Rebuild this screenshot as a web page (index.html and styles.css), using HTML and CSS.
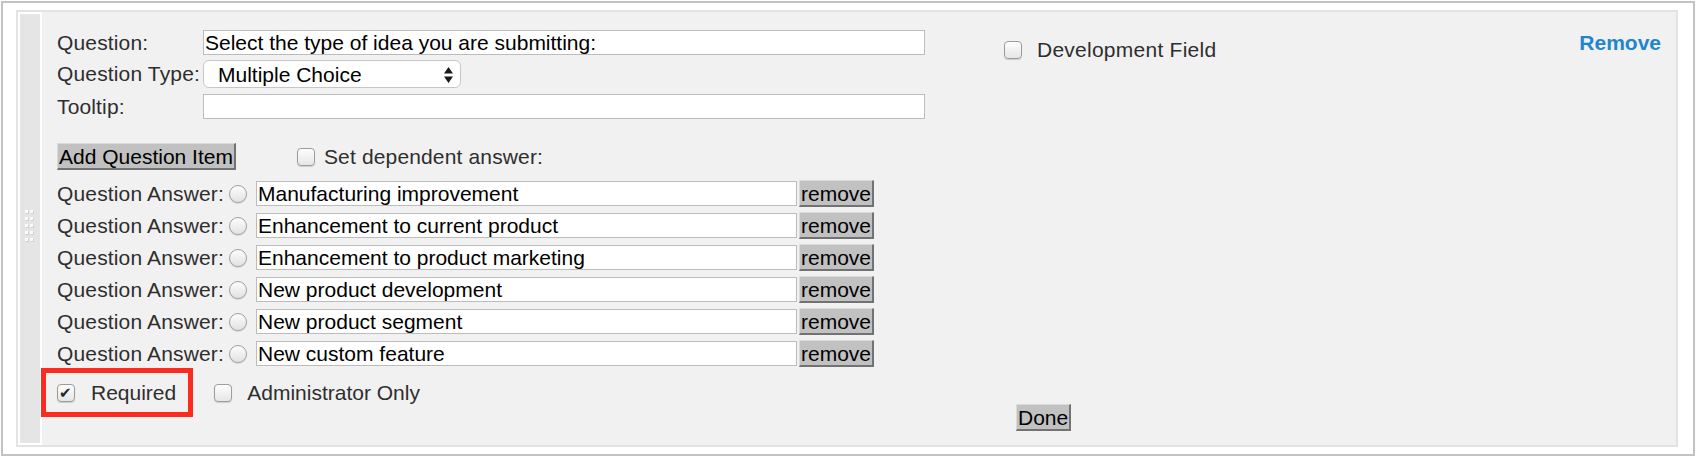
FILE: index.html
```html
<!DOCTYPE html>
<html lang="en">
<head>
    <meta charset="UTF-8">
    <title>Question Editor</title>
    <link rel="stylesheet" href="styles.css">
</head>
<body>
    <div class="frame">
        <div class="panel">
            <div class="handle">
                <svg width="10" height="34" viewBox="0 0 10 34">
                    <g fill="#d0d0d0">
                        <rect x="1" y="1" width="3" height="3"/><rect x="6" y="1" width="3" height="3"/>
                        <rect x="1" y="8" width="3" height="3"/><rect x="6" y="8" width="3" height="3"/>
                        <rect x="1" y="15" width="3" height="3"/><rect x="6" y="15" width="3" height="3"/>
                        <rect x="1" y="22" width="3" height="3"/><rect x="6" y="22" width="3" height="3"/>
                        <rect x="1" y="29" width="3" height="3"/><rect x="6" y="29" width="3" height="3"/>
                    </g>
                    <g fill="#fafafa">
                        <rect x="0" y="0" width="3" height="3"/><rect x="5" y="0" width="3" height="3"/>
                        <rect x="0" y="7" width="3" height="3"/><rect x="5" y="7" width="3" height="3"/>
                        <rect x="0" y="14" width="3" height="3"/><rect x="5" y="14" width="3" height="3"/>
                        <rect x="0" y="21" width="3" height="3"/><rect x="5" y="21" width="3" height="3"/>
                        <rect x="0" y="28" width="3" height="3"/><rect x="5" y="28" width="3" height="3"/>
                    </g>
                </svg>
            </div>

            <div class="content">
                <div class="top">
                    <div class="fields">
                        <div class="field">
                            <label class="field-label">Question:</label>
                            <input class="text wide" type="text" value="Select the type of idea you are submitting:">
                        </div>
                        <div class="field field-type">
                            <label class="field-label">Question Type:</label>
                            <span class="select-wrap">
                                <select class="select">
                                    <option>Multiple Choice</option>
                                    <option>Single Line Text</option>
                                    <option>Checkbox</option>
                                </select>
                                <svg class="arrows" width="9" height="16" viewBox="0 0 9 16">
                                    <path d="M4.5 0 L9 6.5 H0 Z M0 9.5 H9 L4.5 16 Z" fill="#1a1a1a"/>
                                </svg>
                            </span>
                        </div>
                        <div class="field field-tooltip">
                            <label class="field-label">Tooltip:</label>
                            <input class="text wide" type="text" value="">
                        </div>
                    </div>
                    <label class="check dev"><input type="checkbox">Development Field</label>
                    <a class="remove-link" href="#">Remove</a>
                </div>

                <div class="add-row">
                    <button class="btn" type="button">Add Question Item</button>
                    <label class="check dependent"><input type="checkbox">Set dependent answer:</label>
                </div>

                <div class="answers">
                    <div class="answer">
                        <span class="answer-label">Question Answer:</span>
                        <input class="radio" type="radio" name="default">
                        <input class="text answer-text" type="text" value="Manufacturing improvement">
                        <button class="btn" type="button">remove</button>
                    </div>
                    <div class="answer">
                        <span class="answer-label">Question Answer:</span>
                        <input class="radio" type="radio" name="default">
                        <input class="text answer-text" type="text" value="Enhancement to current product">
                        <button class="btn" type="button">remove</button>
                    </div>
                    <div class="answer">
                        <span class="answer-label">Question Answer:</span>
                        <input class="radio" type="radio" name="default">
                        <input class="text answer-text" type="text" value="Enhancement to product marketing">
                        <button class="btn" type="button">remove</button>
                    </div>
                    <div class="answer">
                        <span class="answer-label">Question Answer:</span>
                        <input class="radio" type="radio" name="default">
                        <input class="text answer-text" type="text" value="New product development">
                        <button class="btn" type="button">remove</button>
                    </div>
                    <div class="answer">
                        <span class="answer-label">Question Answer:</span>
                        <input class="radio" type="radio" name="default">
                        <input class="text answer-text" type="text" value="New product segment">
                        <button class="btn" type="button">remove</button>
                    </div>
                    <div class="answer">
                        <span class="answer-label">Question Answer:</span>
                        <input class="radio" type="radio" name="default">
                        <input class="text answer-text" type="text" value="New custom feature">
                        <button class="btn" type="button">remove</button>
                    </div>
                </div>

                <div class="flags">
                    <label class="check highlight"><input type="checkbox" checked>Required</label>
                    <label class="check"><input type="checkbox">Administrator Only</label>
                </div>

                <div class="actions">
                    <button class="btn done" type="button">Done</button>
                </div>
            </div>
        </div>
    </div>
</body>
</html>
```

FILE: styles.css
```css
/* Base */
* {
    box-sizing: border-box;
}

body {
    margin: 0;
    font-family: 'Liberation Sans', Arial, sans-serif;
    font-size: 21px;
    color: #2e2e2e;
    background: #fff;
}

/* Outer frame */
.frame {
    margin: 1px;
    border: 2px solid #c3c3c3;
    padding: 7px 15px 7px 13px;
    background: #fff;
}

/* Question panel */
.panel {
    display: flex;
    border: 2px solid #e3e3e3;
    background: #f1f1f1;
}

.handle {
    width: 24px;
    border: 2px solid #fff;
    background: #e5e5e5;
    display: flex;
    align-items: center;
    justify-content: center;
}

.handle svg {
    display: block;
    margin-top: -3px;
}

.content {
    flex: 1;
    padding: 18px 15px 14px 15px;
}

/* Top block */
.top {
    display: flex;
    align-items: flex-start;
}

.fields {
    width: 868px;
}

.field {
    display: flex;
    align-items: center;
    height: 25px;
}

.field-type {
    height: 28px;
    margin-top: 5px;
}

.field-tooltip {
    margin-top: 6px;
}

.field-label {
    width: 146px;
    white-space: nowrap;
    letter-spacing: 0.15px;
}

/* Text inputs */
.text {
    height: 25px;
    padding: 0 1px;
    border: 1px solid #bcbcbc;
    background: #fff;
    font-family: 'Liberation Sans', Arial, sans-serif;
    font-size: 21px;
    color: #000;
    outline: none;
}

.wide {
    width: 722px;
}

/* Select */
.select-wrap {
    position: relative;
    display: inline-block;
}

.select {
    display: block;
    width: 258px;
    height: 28px;
    padding: 0 30px 0 14px;
    border: 1px solid #c6c6c6;
    border-radius: 6px;
    background: #fff;
    font-family: 'Liberation Sans', Arial, sans-serif;
    font-size: 21px;
    color: #000;
    appearance: none;
    -webkit-appearance: none;
    outline: none;
}

.arrows {
    position: absolute;
    right: 8px;
    top: 7px;
    pointer-events: none;
}

/* Checkboxes */
.check {
    display: inline-flex;
    align-items: center;
    line-height: 24px;
    white-space: nowrap;
}

.check input {
    appearance: none;
    -webkit-appearance: none;
    width: 18px;
    height: 18px;
    margin: 0 15px 0 0;
    border: 1px solid #9c9c9c;
    border-radius: 4px;
    background: linear-gradient(#fdfdfd, #e6e6e6);
    box-shadow: 0 1px 1px rgba(0,0,0,0.15);
    position: relative;
    flex-shrink: 0;
}

.check input:checked::after {
    content: '\2714';
    position: absolute;
    left: 1px;
    top: -1px;
    font-family: 'DejaVu Sans', sans-serif;
    font-size: 15px;
    line-height: 19px;
    color: #262626;
}

.dev {
    margin-left: 79px;
    margin-top: 8px;
    letter-spacing: 0.25px;
}

.dependent {
    margin-left: 61px;
    letter-spacing: 0.15px;
}

.dependent input {
    margin-right: 9px;
}

.remove-link {
    margin-left: auto;
    margin-top: 1px;
    line-height: 24px;
    font-weight: bold;
    color: #1f85cf;
    text-decoration: none;
}

/* Buttons */
.btn {
    height: 27px;
    padding: 1px 1px 0;
    border-style: solid;
    border-width: 1px 2px 2px 1px;
    border-color: #dadada #727272 #727272 #dadada;
    background: #c1c1c1;
    font-family: 'Liberation Sans', Arial, sans-serif;
    font-size: 21px;
    line-height: 23px;
    color: #000;
    cursor: pointer;
}

.add-row {
    display: flex;
    align-items: center;
    height: 27px;
    margin-top: 24px;
}

/* Answers */
.answers {
    display: flex;
    flex-direction: column;
    gap: 5px;
    margin-top: 10px;
}

.answer {
    display: flex;
    align-items: center;
    height: 27px;
}

.answer-label {
    width: 173px;
    white-space: nowrap;
    letter-spacing: 0.15px;
}

.radio {
    appearance: none;
    -webkit-appearance: none;
    flex-shrink: 0;
    width: 18px;
    height: 18px;
    margin: 0 9px 0 -1px;
    border: 1px solid #a0a0a0;
    border-radius: 50%;
    background: linear-gradient(#fdfdfd, #e2e2e2);
    box-shadow: 0 1px 1px rgba(0,0,0,0.12);
}

.answer-text {
    width: 541px;
}

.answer .btn {
    margin-left: 2px;
}

/* Flags */
.flags {
    display: flex;
    align-items: center;
    gap: 38px;
    height: 22px;
    margin-top: 15px;
}

.highlight {
    position: relative;
}

.highlight input {
    margin-right: 16px;
}

.highlight::after {
    content: '';
    position: absolute;
    top: -13px;
    bottom: -12px;
    left: -16px;
    right: -17px;
    border: 5px solid #fb2b1f;
}

/* Actions */
.actions {
    display: flex;
}

.done {
    margin-left: 959px;
}
```
